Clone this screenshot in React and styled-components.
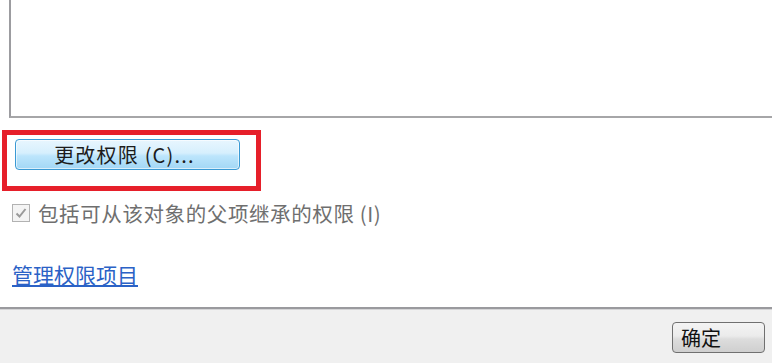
import React from "react";
import styled, { createGlobalStyle } from "styled-components";

const GlobalStyle = createGlobalStyle`
    html, body {
        margin: 0;
        padding: 0;
        background: #fff;
    }
    body {
        font-family: "Noto Sans CJK SC", "Liberation Sans", sans-serif;
    }
`;

const Dialog = styled.div`
    width: 772px;
    height: 363px;
    overflow: hidden;
    display: flex;
    flex-direction: column;
    background: #fff;
`;

const ListBox = styled.div`
    box-sizing: border-box;
    height: 118px;
    margin-left: 9px;
    width: calc(100% - 9px);
    border-left: 2px solid #9c9ca0;
    border-bottom: 2px solid #a6a6a8;
    background: #fff;
`;

const Highlight = styled.div`
    box-sizing: border-box;
    margin-top: 12px;
    margin-left: 2px;
    width: 259px;
    height: 61px;
    border: 5px solid #e61f2a;
    padding: 4px 0 0 8px;
`;

const PermButton = styled.button`
    box-sizing: border-box;
    width: 225px;
    height: 31px;
    padding: 0 6px 0 0;
    border: 1px solid #3a9ad4;
    border-radius: 4px;
    background: linear-gradient(to bottom, #e8f6fe 0%, #d6effd 45%, #bce5fc 55%, #a2d7f5 100%);
    box-shadow: inset 0 0 0 1px rgba(255, 255, 255, 0.6);
    font-family: "Noto Sans CJK SC", sans-serif;
    font-size: 20px;
    line-height: 29px;
    color: #1c1c1c;
    text-align: center;
    letter-spacing: 1.2px;
    white-space: nowrap;
`;

const CheckRow = styled.label`
    display: flex;
    align-items: center;
    gap: 8px;
    margin-top: 10px;
    margin-left: 12px;
    height: 24px;
    font-size: 20.5px;
    letter-spacing: 0.6px;
    color: #6f6f6f;
    white-space: nowrap;
`;

const CheckBox = styled.span`
    box-sizing: border-box;
    width: 18px;
    height: 18px;
    border: 1px solid #b2b2b2;
    background: #f4f4f4;
    display: flex;
    align-items: center;
    justify-content: center;
`;

const Link = styled.a`
    display: block;
    margin-top: 37px;
    margin-left: 12px;
    height: 25px;
    line-height: 25px;
    font-size: 21px;
    color: #2b62c6;
    text-decoration: underline;
    text-underline-offset: 2px;
    width: fit-content;
`;

const Footer = styled.div`
    margin-top: 20px;
    flex: 1;
    border-top: 2px solid #9a9a9e;
    box-shadow: inset 0 1px 0 #d4d4d6;
    background: #f0f0f0;
    display: flex;
    justify-content: flex-end;
    align-items: flex-start;
    padding: 13px 7px 0 0;
`;

const OkButton = styled.button`
    box-sizing: border-box;
    width: 93px;
    height: 31px;
    border: 1px solid #707070;
    border-radius: 4px;
    background: linear-gradient(to bottom, #f4f4f4 0%, #ebebeb 45%, #dddddd 55%, #cfcfcf 100%);
    font-family: "Noto Sans CJK SC", sans-serif;
    font-size: 20px;
    line-height: 29px;
    color: #111;
    text-align: left;
    padding: 0 0 0 8px;
`;

const Check = () => (
    <svg width="12" height="12" viewBox="0 0 12 12">
        <path d="M1.5 6.5 L4.5 9.5 L10.5 2" fill="none" stroke="#9a9a9a" strokeWidth="2" />
    </svg>
);

const App = () => {
    return (
        <Dialog>
            <GlobalStyle />
            <ListBox />
            <Highlight>
                <PermButton>更改权限 (C)...</PermButton>
            </Highlight>
            <CheckRow>
                <CheckBox>
                    <Check />
                </CheckBox>
                包括可从该对象的父项继承的权限 (I)
            </CheckRow>
            <Link href="#">管理权限项目</Link>
            <Footer>
                <OkButton>确定</OkButton>
            </Footer>
        </Dialog>
    );
};

export default App;
